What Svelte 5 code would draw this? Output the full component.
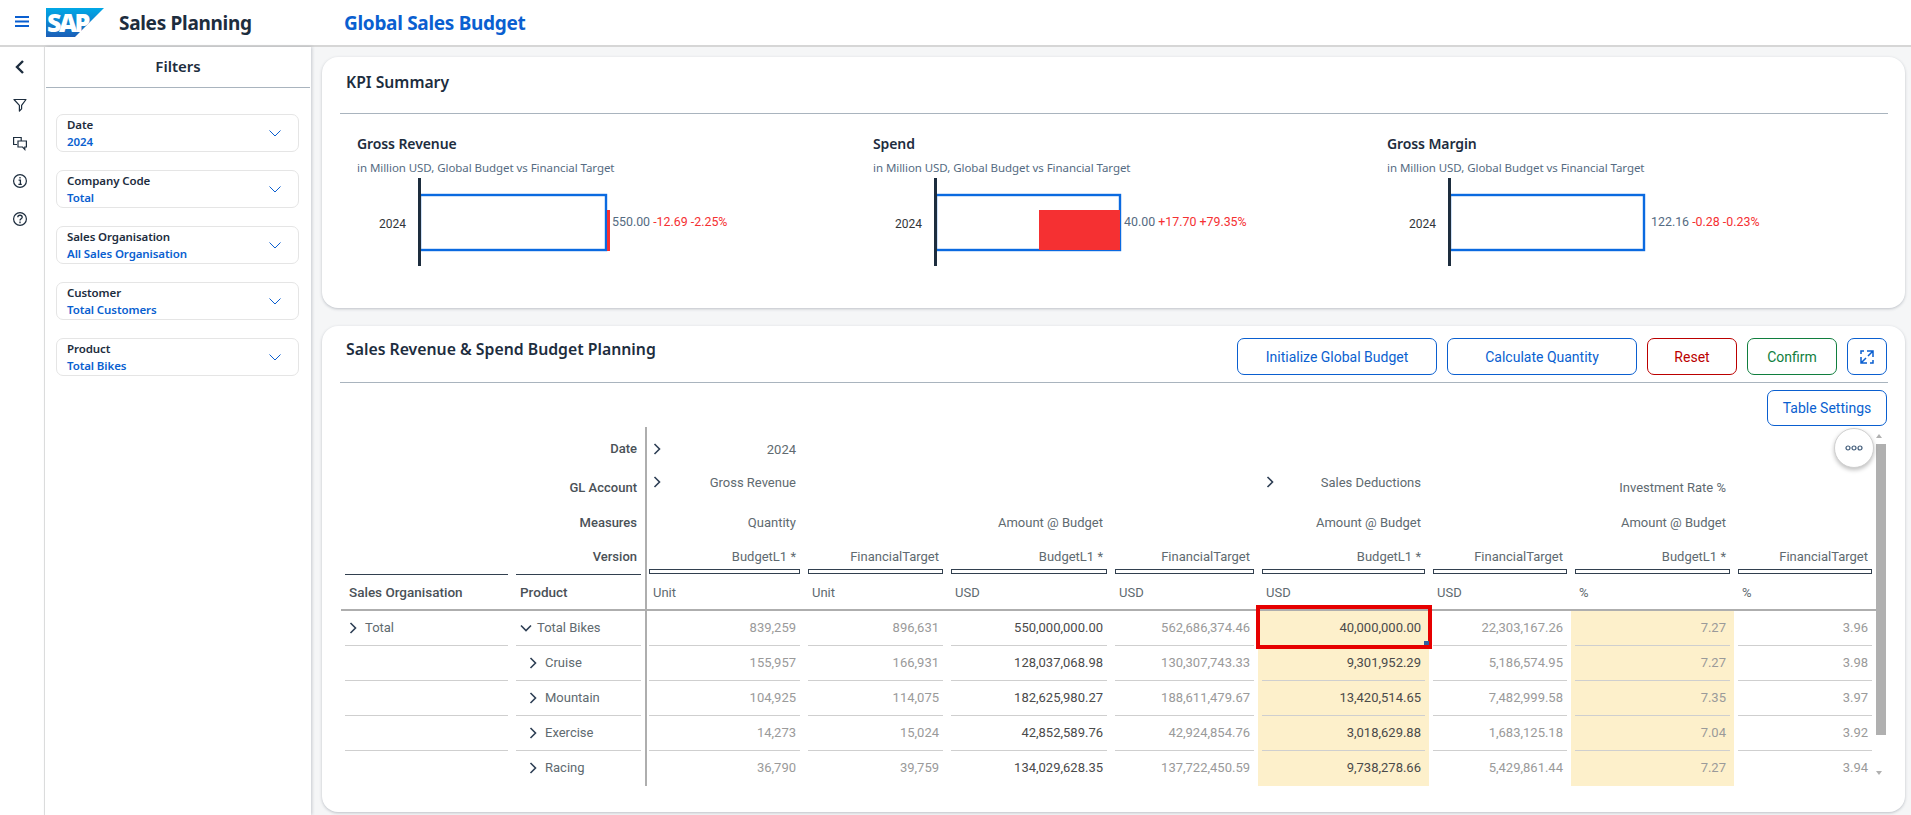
<script>
  const filters = [
    { label: "Date", value: "2024" },
    { label: "Company Code", value: "Total" },
    { label: "Sales Organisation", value: "All Sales Organisation" },
    { label: "Customer", value: "Total Customers" },
    { label: "Product", value: "Total Bikes" },
  ];

  const kpis = [
    { title: "Gross Revenue", barEnd: 187, red: [188, 3, 32, 41], value: "550.00", diff: "-12.69 -2.25%", labelX: 193 },
    { title: "Spend", barEnd: 185, red: [104, 81, 32, 40], value: "40.00", diff: "+17.70 +79.35%", labelX: 189 },
    { title: "Gross Margin", barEnd: 195, red: null, value: "122.16", diff: "-0.28 -0.23%", labelX: 202 },
  ];

  const units = ["Unit", "Unit", "USD", "USD", "USD", "USD", "%", "%"];
  const versions = ["BudgetL1 *", "FinancialTarget", "BudgetL1 *", "FinancialTarget", "BudgetL1 *", "FinancialTarget", "BudgetL1 *", "FinancialTarget"];

  const rows = [
    { org: "Total", name: "Total Bikes", open: true, v: ["839,259", "896,631", "550,000,000.00", "562,686,374.46", "40,000,000.00", "22,303,167.26", "7.27", "3.96"] },
    { name: "Cruise", v: ["155,957", "166,931", "128,037,068.98", "130,307,743.33", "9,301,952.29", "5,186,574.95", "7.27", "3.98"] },
    { name: "Mountain", v: ["104,925", "114,075", "182,625,980.27", "188,611,479.67", "13,420,514.65", "7,482,999.58", "7.35", "3.97"] },
    { name: "Exercise", v: ["14,273", "15,024", "42,852,589.76", "42,924,854.76", "3,018,629.88", "1,683,125.18", "7.04", "3.92"] },
    { name: "Racing", v: ["36,790", "39,759", "134,029,628.35", "137,722,450.59", "9,738,278.66", "5,429,861.44", "7.27", "3.94"] },
  ];

  const dark = [2, 4];
  const input = [4, 6];
</script>

<header class="shell">
  <svg class="burger" viewBox="0 0 14 11" width="14" height="11">
    <path d="M0 1h14M0 5.5h14M0 10h14" stroke="#0a5fd0" stroke-width="2" />
  </svg>
  <svg class="logo" viewBox="0 0 58 29" width="58" height="29">
    <defs>
      <linearGradient id="sapfill" x1="0" y1="0" x2="0" y2="1">
        <stop offset="0" stop-color="#00a8e6" />
        <stop offset="1" stop-color="#1c5fb8" />
      </linearGradient>
    </defs>
    <polygon points="0,0 58,0 29,29 0,29" fill="url(#sapfill)" />
    <text x="1" y="24" class="logotext">SAP</text>
  </svg>
  <span class="app">Sales Planning</span>
  <span class="page">Global Sales Budget</span>
</header>

<div class="body">
  <nav class="rail">
    <svg viewBox="0 0 16 16" width="16" height="16"><path d="M11 2 5 8l6 6" fill="none" stroke="#1d2d3e" stroke-width="2.4" /></svg>
    <svg viewBox="0 0 16 16" width="16" height="16"><path d="M2 2.5h12L9.6 8.4v3.4L7.4 14V8.4z" fill="none" stroke="#1d2d3e" stroke-width="1.2" stroke-linejoin="round" /></svg>
    <svg viewBox="0 0 16 16" width="16" height="16"><path d="M5 9.5H1.6V2.5h7.6v3M6 6h8.4v6h-1.6v2.4L10.6 12H6z" fill="none" stroke="#1d2d3e" stroke-width="1.2" /></svg>
    <svg viewBox="0 0 16 16" width="16" height="16"><circle cx="8" cy="8" r="6.4" fill="none" stroke="#1d2d3e" stroke-width="1.2" /><path d="M8 4v1.6M6.6 7.2H8.4v4M6.4 11.4h3.4" fill="none" stroke="#1d2d3e" stroke-width="1.3" /></svg>
    <svg viewBox="0 0 16 16" width="16" height="16"><circle cx="8" cy="8" r="6.4" fill="none" stroke="#1d2d3e" stroke-width="1.2" /><path d="M5.8 6.2C5.8 3.6 10.2 3.6 10.2 6.2 10.2 7.8 8 7.8 8 9.6M8 10.6v1.6" fill="none" stroke="#1d2d3e" stroke-width="1.3" /></svg>
  </nav>

  <aside class="filters">
    <h2>Filters</h2>
    <div class="filterlist">
      {#each filters as f}
        <div class="filter">
          <div class="ftext">
            <span class="flabel">{f.label}</span>
            <span class="fvalue">{f.value}</span>
          </div>
          <svg viewBox="0 0 12 7" width="12" height="7"><path d="M.5.5 6 6 11.5.5" fill="none" stroke="#0a5fd0" stroke-width="1" /></svg>
        </div>
      {/each}
    </div>
  </aside>

  <main>
    <section class="card kpi">
      <h3 class="kpititle">KPI Summary</h3>
      <div class="kpirow">
        {#each kpis as k}
          <div class="kpiitem">
            <div class="kname">{k.title}</div>
            <div class="ksub">in Million USD, Global Budget vs Financial Target</div>
            <svg class="bullet" width="360" height="90" viewBox="0 0 360 90">
              <text x="22" y="50" class="year">2024</text>
              <rect x="1" y="17" width={k.barEnd - 1} height="55" fill="none" stroke="#0a6ae0" stroke-width="2.4" />
              {#if k.red}
                <rect x={k.red[0]} y={k.red[2]} width={k.red[1]} height={k.red[3]} fill="#f53032" />
              {/if}
              <rect x="-1" y="0" width="3" height="88" fill="#1d2d3e" />
              <text x={k.labelX} y="48" class="kval">{k.value} <tspan fill="#f53032">{k.diff}</tspan></text>
            </svg>
          </div>
        {/each}
      </div>
    </section>

    <section class="card plan">
      <div class="planhead">
        <h3>Sales Revenue &amp; Spend Budget Planning</h3>
        <div class="actions">
          <button class="b1">Initialize Global Budget</button>
          <button class="b2">Calculate Quantity</button>
          <button class="b3 red">Reset</button>
          <button class="b3 green">Confirm</button>
          <button class="b4" aria-label="Expand">
            <svg viewBox="0 0 16 16" width="16" height="16">
              <path d="M8 2H14V8M14 2 9 7M8 14H2V8M2 14l5-5M2 5V2h3M14 11v3h-3" fill="none" stroke="#0a5fd0" stroke-width="1.5" />
            </svg>
          </button>
        </div>
      </div>
      <div class="settings"><button class="b5">Table Settings</button></div>

      <div class="tablewrap">
        <table>
          <colgroup>
            <col style="width:171px" /><col style="width:133px" /><col style="width:159px" /><col style="width:143px" />
            <col style="width:164px" /><col style="width:147px" /><col style="width:171px" /><col style="width:142px" />
            <col style="width:163px" /><col style="width:142px" />
          </colgroup>
          <tbody>
            <tr class="hdate">
              <td></td><td class="hl">Date</td>
              <td class="first"><div class="withchev"><svg class="chev" viewBox="0 0 8 12" width="8" height="12"><path d="M1.5 1 6.5 6l-5 5" /></svg><span>2024</span></div></td>
              <td colspan="7"></td>
            </tr>
            <tr class="hgl">
              <td></td><td class="hl">GL Account</td>
              <td class="first up"><div class="withchev"><svg class="chev" viewBox="0 0 8 12" width="8" height="12"><path d="M1.5 1 6.5 6l-5 5" /></svg><span>Gross Revenue</span></div></td>
              <td colspan="3"></td>
              <td class="up"><div class="withchev"><svg class="chev" viewBox="0 0 8 12" width="8" height="12"><path d="M1.5 1 6.5 6l-5 5" /></svg><span>Sales Deductions</span></div></td>
              <td></td>
              <td class="hv">Investment Rate %</td>
              <td></td>
            </tr>
            <tr class="hmeasure">
              <td></td><td class="hl">Measures</td>
              <td class="first hv">Quantity</td><td></td>
              <td class="hv">Amount @ Budget</td><td></td>
              <td class="hv">Amount @ Budget</td><td></td>
              <td class="hv">Amount @ Budget</td><td></td>
            </tr>
            <tr class="hversion">
              <td class="pad"><div class="rule"></div></td>
              <td class="pad"><div class="vlabel">Version</div><div class="rule"></div></td>
              {#each versions as v, i}
                <td class="pad" class:first={i === 0}>
                  <div class="vtext">{v}</div>
                  <div class="box"></div>
                </td>
              {/each}
            </tr>
            <tr class="hunit">
              <td class="strong">Sales Organisation</td>
              <td class="strong">Product</td>
              {#each units as u, i}
                <td class="unit" class:first={i === 0}>{u}</td>
              {/each}
            </tr>
            {#each rows as r, ri}
              <tr class="data" class:last={ri === rows.length - 1}>
                <td class="pad">
                  <div class="cell left">
                    {#if r.org}
                      <svg class="chev" viewBox="0 0 8 12" width="8" height="12"><path d="M1.5 1 6.5 6l-5 5" /></svg>
                      <span class="orgname">{r.org}</span>
                    {/if}
                  </div>
                </td>
                <td class="pad">
                  <div class="cell left" class:indent={!r.open}>
                    {#if r.open}
                      <svg class="chevdown" viewBox="0 0 12 8" width="12" height="8"><path d="M1 1.5 6 6.5l5-5" /></svg>
                    {:else}
                      <svg class="chev" viewBox="0 0 8 12" width="8" height="12"><path d="M1.5 1 6.5 6l-5 5" /></svg>
                    {/if}
                    <span class="prod">{r.name}</span>
                  </div>
                </td>
                {#each r.v as val, i}
                  <td class="pad num" class:first={i === 0} class:dark={dark.includes(i)} class:input={input.includes(i)}>
                    <div class="cell">{val}</div>
                    {#if ri === 0 && i === 4}
                      <div class="selected"><span class="handle"></span></div>
                    {/if}
                  </td>
                {/each}
              </tr>
            {/each}
          </tbody>
        </table>
        <div class="scroll">
          <span class="arrow upa"></span>
          <span class="thumb"></span>
          <span class="arrow downa"></span>
        </div>
        <button class="more" aria-label="More">
          <svg viewBox="0 0 18 6" width="18" height="6">
            <circle cx="3" cy="3" r="2" /><circle cx="9" cy="3" r="2" /><circle cx="15" cy="3" r="2" />
          </svg>
        </button>
      </div>
    </section>
  </main>
</div>

<style>
  :global(body) {
    margin: 0;
    background: #f5f6f7;
    font-family: Roboto, "Liberation Sans", sans-serif;
    color: #32363a;
    overflow: hidden;
  }
  svg {
    display: block;
    flex: none;
  }
  h2,
  h3 {
    margin: 0;
  }

  /* shell */
  .shell {
    height: 45px;
    background: #fff;
    border-bottom: 2px solid #d6d6d6;
    display: flex;
    align-items: center;
  }
  .burger {
    margin-left: 15px;
    margin-top: -3px;
  }
  .logo {
    margin-left: 17px;
    margin-top: -1px;
    overflow: visible;
  }
  .logotext {
    font: 800 25px/25px "Open Sans", sans-serif;
    letter-spacing: -2.5px;
    fill: #fff;
  }
  .app {
    margin-left: 15px;
    width: 225px;
    font: 700 19px "Noto Sans", sans-serif;
    letter-spacing: -0.3px;
    color: #1d2d3e;
  }
  .page {
    font: 700 19px "Noto Sans", sans-serif;
    letter-spacing: -0.3px;
    color: #0a5fd0;
  }
  .body {
    display: flex;
    height: 768px;
  }

  .rail {
    width: 45px;
    background: #fff;
    border-right: 1px solid #e3e3e3;
    display: flex;
    flex-direction: column;
    align-items: center;
    gap: 22px;
    padding-top: 12px;
    box-sizing: border-box;
    padding-right: 5px;
  }

  .filters {
    width: 266px;
    background: #fff;
    box-shadow: 1px 0 3px rgba(60, 70, 90, 0.25);
    flex: none;
  }
  .filters h2 {
    height: 40px;
    margin: 0 1px;
    border-bottom: 1px solid #a9b4be;
    box-sizing: content-box;
    font: 600 15px "Noto Sans", sans-serif;
    text-align: center;
    line-height: 38px;
    color: #1d2d3e;
  }
  .filterlist {
    padding: 26px 0 0 11px;
    display: flex;
    flex-direction: column;
    gap: 18px;
  }
  .filter {
    width: 243px;
    height: 38px;
    box-sizing: border-box;
    border: 1px solid #e5e5e5;
    border-radius: 7px;
    display: flex;
    align-items: center;
    justify-content: space-between;
    padding: 0 17px 0 10px;
  }
  .ftext {
    display: flex;
    flex-direction: column;
    gap: 4px;
    font: 600 11.5px "Noto Sans", sans-serif;
    letter-spacing: -0.1px;
  }
  .flabel {
    color: #1d2d3e;
    line-height: 13px;
  }
  .fvalue {
    color: #0a5fd0;
    line-height: 13px;
  }

  main {
    flex: 1;
    padding: 10px 6px 0 11px;
    display: flex;
    flex-direction: column;
    gap: 18px;
    min-width: 0;
  }
  .card {
    background: #fff;
    border-radius: 16px;
    box-shadow: 0 1px 3px rgba(60, 70, 90, 0.3);
    box-sizing: border-box;
  }

  /* kpi */
  .kpi {
    height: 251px;
    padding: 0 17px 0 18px;
  }
  .kpititle {
    height: 57px;
    box-sizing: border-box;
    padding: 15px 0 0 6px;
    border-bottom: 1px solid #a9b4be;
    font: 600 15.7px/20px "Noto Sans", sans-serif;
    color: #1d2d3e;
  }
  .kpirow {
    display: grid;
    grid-template-columns: 516px 514px 1fr;
    padding: 21px 0 0 17px;
  }
  .kname {
    font: 600 14px/18px "Noto Sans", sans-serif;
    letter-spacing: -0.1px;
    color: #1d2d3e;
  }
  .ksub {
    margin-top: 7px;
    font: 400 11.5px/15px "Noto Sans", sans-serif;
    letter-spacing: -0.06px;
    color: #556b82;
  }
  .bullet {
    margin-top: 3px;
    margin-left: 62px;
    overflow: visible;
  }
  .year {
    font-size: 12px;
    fill: #32363a;
    transform: translate(-62px, 0);
  }
  .kval {
    font-size: 12.4px;
    fill: #556b82;
  }

  /* plan */
  .plan {
    height: 486px;
    padding: 12px 17px 0 18px;
    position: relative;
  }
  .planhead {
    height: 44px;
    border-bottom: 1px solid #a9b4be;
    display: flex;
    justify-content: space-between;
    align-items: flex-start;
  }
  .planhead h3 {
    padding: 1px 0 0 6px;
    font: 600 15.8px/20px "Noto Sans", sans-serif;
    color: #1d2d3e;
  }
  .actions {
    display: flex;
    gap: 10px;
    margin-right: 1px;
  }
  button {
    height: 37px;
    background: #fff;
    border: 1px solid #0a5fd0;
    border-radius: 7px;
    color: #0a5fd0;
    font: 400 14px Roboto, sans-serif;
    padding: 0;
    display: flex;
    align-items: center;
    justify-content: center;
  }
  .b1 {
    width: 200px;
  }
  .b2 {
    width: 190px;
  }
  .b3 {
    width: 90px;
  }
  .b4 {
    width: 40px;
  }
  .b5 {
    width: 120px;
    height: 36px;
  }
  .red {
    border-color: #bb0000;
    color: #bb0000;
  }
  .green {
    border-color: #107e3e;
    color: #107e3e;
  }
  .settings {
    display: flex;
    justify-content: flex-end;
    margin: 7px 1px 0 0;
  }

  .tablewrap {
    position: absolute;
    left: 19px;
    top: 101px;
    display: flex;
    height: 355px;
  }
  table {
    table-layout: fixed;
    width: 1535px;
    border-collapse: separate;
    border-spacing: 0;
    font-size: 13px;
    color: #556066;
    height: 355px;
  }
  td {
    padding: 0 8px;
    position: relative;
    white-space: nowrap;
    box-sizing: border-box;
    overflow: visible;
  }
  td.first {
    border-left: 2px solid #aeaeae;
    padding-left: 6px;
  }
  td.pad {
    padding: 0 4px;
    vertical-align: bottom;
  }
  td.pad.first {
    padding-left: 2px;
  }
  .hl,
  .strong,
  .vlabel {
    font-weight: 500;
    color: #4a5157;
  }
  .hl {
    text-align: right;
  }
  .hdate {
    height: 38px;
  }
  .hgl {
    height: 40px;
  }
  .hmeasure {
    height: 35px;
  }
  .hversion {
    height: 35px;
  }
  .hunit {
    height: 36px;
  }
  .hunit td {
    border-bottom: 2px solid #aeaeae;
  }
  .hv {
    text-align: right;
    color: #606a70;
  }
  .hdate .hl {
    padding-top: 4px;
  }
  .hgl .hl,
  .hgl .hv {
    padding-top: 4px;
  }
  .up {
    vertical-align: middle;
    padding-bottom: 6px;
  }
  .withchev {
    display: flex;
    justify-content: space-between;
    align-items: center;
    color: #606a70;
  }
  .hdate .withchev {
    padding-top: 6px;
  }
  .rule {
    border-bottom: 1px solid #32404f;
  }
  .vlabel {
    text-align: right;
    padding-right: 4px;
    height: 29px;
    line-height: 24px;
  }
  .vtext {
    text-align: right;
    padding-right: 4px;
    height: 24px;
    line-height: 24px;
    color: #606a70;
  }
  .box {
    height: 5px;
    box-sizing: border-box;
    border: 1px solid #32404f;
    margin-bottom: 1px;
  }
  .unit {
    color: #606a70;
  }
  .strong {
    font-size: 13.5px;
  }

  .data {
    height: 35px;
  }
  .data:first-of-type {
    height: 33px;
  }
  .data td {
    height: 33px;
    vertical-align: top;
  }
  .cell {
    height: 33px;
    box-sizing: border-box;
    border-bottom: 1px solid #cfcfcf;
    padding: 7px 4px 0;
    line-height: 16px;
    text-align: right;
  }
  .data:not(:first-of-type) .cell {
    height: 35px;
    padding-top: 9px;
  }
  .data.last .cell {
    height: 33px;
    border-bottom: 0;
  }
  .left {
    text-align: left;
    display: flex;
    gap: 8px;
    color: #606a70;
  }
  .left svg {
    margin-top: 2px;
  }
  .orgname {
    color: #606a70;
  }
  .chev path,
  .chevdown path {
    fill: none;
    stroke: #2e3f55;
    stroke-width: 1.6;
  }
  .left .chevdown {
    margin-top: 4px;
    margin-right: -3px;
  }
  .indent {
    padding-left: 13px;
  }
  .num {
    color: #9a9a9a;
  }
  .dark {
    color: #4a4a4a;
  }
  .num.input {
    background: #fdf0cb;
  }
  .selected {
    position: absolute;
    left: -2px;
    right: -3px;
    top: -6px;
    bottom: -3px;
    border: 4.5px solid #e60000;
    pointer-events: none;
    z-index: 5;
  }
  .handle {
    position: absolute;
    right: -0.5px;
    bottom: 0;
    width: 5px;
    height: 4px;
    background: #2f5fa0;
  }

  .scroll {
    width: 10px;
    height: 355px;
    position: relative;
    flex: none;
  }
  .thumb {
    position: absolute;
    top: 17px;
    left: 0;
    width: 10px;
    height: 291px;
    background: #b0b0b0;
  }
  .arrow {
    position: absolute;
    left: 0;
    width: 0;
    height: 0;
    border-left: 3.5px solid transparent;
    border-right: 3.5px solid transparent;
  }
  .upa {
    top: 7px;
    border-bottom: 4px solid #b0b0b0;
  }
  .downa {
    top: 344px;
    border-top: 4px solid #b0b0b0;
  }
  .more {
    position: absolute;
    left: 1493px;
    top: 1px;
    width: 40px;
    height: 40px;
    border-radius: 50%;
    border: 1px solid #d0d0d0;
    box-shadow: 0 2px 4px rgba(0, 0, 0, 0.25);
  }
  .more circle {
    fill: none;
    stroke: #3f5a78;
    stroke-width: 1.2;
  }
</style>
